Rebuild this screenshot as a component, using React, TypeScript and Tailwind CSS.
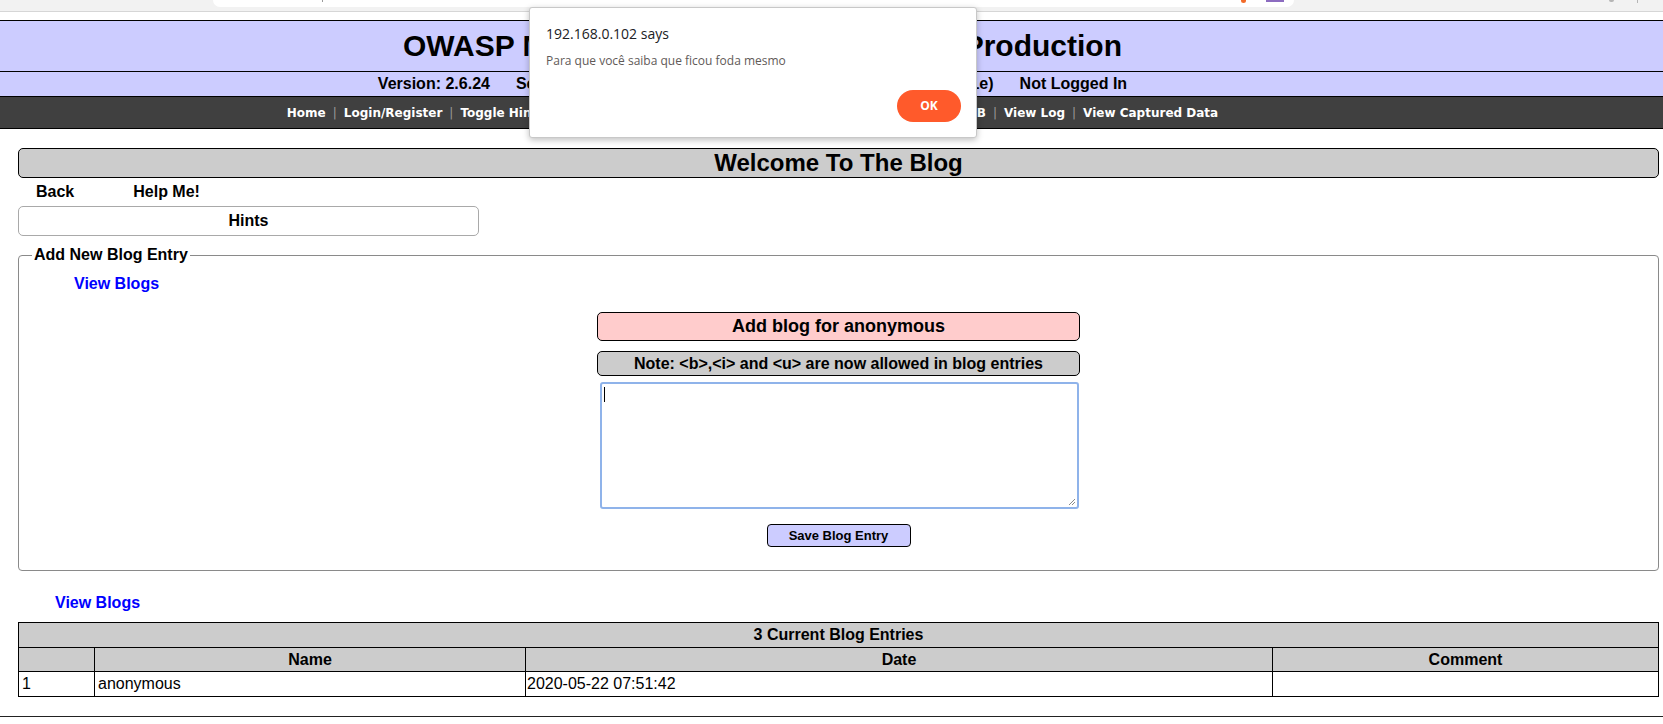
const navItems = [
  "Home",
  "Login/Register",
  "Toggle Hints",
  "Show Popup Hints",
  "Toggle Security",
  "Enforce SSL",
  "Reset DB",
  "View Log",
  "View Captured Data",
];

const App = () => {
  return (
    <div className="relative w-[1663px] h-[724px] overflow-hidden bg-white text-black font-['Liberation_Sans',Arial,sans-serif]">
      {/* browser chrome strip */}
      <div className="h-[12px] bg-[#f2f2f2] border-b border-[#d6d6d6] flex items-start">
        <div className="ml-[213px] w-[1081px] h-[7px] bg-white rounded-b-[7px] flex items-start">
          <div className="ml-[109px] w-px h-[2px] bg-[#9a9a9a]" />
          <div className="ml-[918px] w-[5px] h-[3px] bg-[#f26b2a] rounded-b-full" />
          <div className="ml-[20px] w-[18px] h-[2px] bg-[#8c6cc0]" />
        </div>
        <div className="ml-[315px] w-[5px] h-[2px] bg-[#b5b5b5] rounded-b-sm" />
        <div className="ml-[23px] w-px h-[3px] bg-[#b5b5b5]" />
      </div>

      {/* header */}
      <div className="mt-[8px] border-t border-black bg-[#ccccff]">
        <div className="h-[50px] flex items-center justify-center pr-[138px] text-[30px] font-bold leading-none">
          OWASP Mutillidae II: Web Pwn in Mass Production
        </div>
        <div className="h-[25px] border-t border-black flex items-center justify-center pr-[158px] gap-[26px] text-[16px] font-bold">
          <span>Version: 2.6.24</span>
          <span>Security Level: 0 (Hosed)</span>
          <span>Hints: Enabled (1 - 5cr1pt K1dd1e)</span>
          <span>Not Logged In</span>
        </div>
        <div className="h-[33px] border-y border-black bg-[#404040] flex items-center justify-center pr-[158px] text-white text-[12px] font-bold font-['DejaVu_Sans',Verdana,sans-serif]">
          {navItems.map((item, i) => (
            <span key={item} className="flex items-center">
              {i > 0 && <span className="mx-[7px] font-normal text-[#9a9a9a]">|</span>}
              <span>{item}</span>
            </span>
          ))}
        </div>
      </div>

      {/* page title */}
      <div className="mt-[19px] ml-[18px] w-[1641px] h-[30px] border border-black rounded-[5px] bg-[#cccccc] flex items-center justify-center text-[24px] font-bold">
        Welcome To The Blog
      </div>

      <div className="h-[27px] flex items-center text-[16px] font-bold">
        <span className="ml-[36px]">Back</span>
        <span className="ml-[59px]">Help Me!</span>
      </div>

      <div className="mt-px ml-[18px] w-[461px] h-[30px] border border-[#a9a9a9] rounded-[5px] flex items-center justify-center text-[16px] font-bold">
        Hints
      </div>

      {/* add entry form */}
      <fieldset className="mt-[10px] ml-[18px] w-[1641px] border border-[#8a8a8a] rounded-[4px] pb-[23px]">
        <legend className="ml-[13px] px-[2px] text-[16px] font-bold leading-[18px]">Add New Blog Entry</legend>
        <div className="mt-[11px] ml-[55px] text-[16px] font-bold leading-[18px] text-[#0000ff]">View Blogs</div>
        <div className="mt-[19px] flex flex-col items-center">
          <div className="w-[483px] h-[29px] border border-black rounded-[5px] bg-[#ffcccc] flex items-center justify-center text-[18px] font-bold">
            Add blog for anonymous
          </div>
          <div className="mt-[10px] w-[483px] h-[25px] border border-black rounded-[5px] bg-[#cccccc] flex items-center justify-center text-[16px] font-bold">
            Note: &lt;b&gt;,&lt;i&gt; and &lt;u&gt; are now allowed in blog entries
          </div>
          <div className="relative mt-[6px] ml-[2px] w-[479px] h-[127px] border-2 border-[#8fb3ea] rounded-[3px] bg-white">
            <div className="absolute left-[2px] top-[3px] w-px h-[15px] bg-black" />
            <svg className="absolute right-[1px] bottom-[1px]" width="9" height="9" viewBox="0 0 9 9">
              <line x1="8" y1="2" x2="2" y2="8" stroke="#8a8a8a" strokeWidth="1" />
              <line x1="8" y1="5" x2="5" y2="8" stroke="#8a8a8a" strokeWidth="1" />
            </svg>
          </div>
          <div className="mt-[15px] w-[144px] h-[23px] border border-black rounded-[4px] bg-[#ccccff] flex items-center justify-center text-[13px] font-bold">
            Save Blog Entry
          </div>
        </div>
      </fieldset>

      <div className="mt-[23px] ml-[55px] text-[16px] font-bold leading-[18px] text-[#0000ff]">View Blogs</div>

      {/* entries table */}
      <table className="mt-[10px] ml-[18px] w-[1641px] border-collapse border border-black text-[16px] leading-[18px]">
        <tbody>
          <tr className="h-[25px] bg-[#cccccc]">
            <td colSpan={4} className="border border-black text-center font-bold">3 Current Blog Entries</td>
          </tr>
          <tr className="h-[24px] bg-[#cccccc] font-bold">
            <td className="w-[76px] border border-black" />
            <td className="w-[431px] border border-black text-center">Name</td>
            <td className="w-[747px] border border-black text-center">Date</td>
            <td className="border border-black text-center">Comment</td>
          </tr>
          <tr className="h-[25px]">
            <td className="border border-black px-[3px]">1</td>
            <td className="border border-black px-[3px]">anonymous</td>
            <td className="border border-black px-[1px]">2020-05-22 07:51:42</td>
            <td className="border border-black" />
          </tr>
        </tbody>
      </table>

      <div className="mt-[19px] h-px bg-[#222]" />

      {/* browser alert dialog */}
      <div className="absolute left-[529px] top-[7px] w-[448px] h-[131px] bg-white border border-[#c8c8c8] rounded-[3px] shadow-[0_2px_6px_rgba(0,0,0,0.25)] font-['Open_Sans',sans-serif] flex flex-col">
        <div className="mt-[16px] ml-[16px] text-[14px] leading-[20px] text-[#202124]">192.168.0.102 says</div>
        <div className="mt-[9px] ml-[16px] text-[12px] leading-[16px] text-[#5f5a58]">
          Para que você saiba que ficou foda mesmo
        </div>
        <div className="mt-auto mb-[15px] mr-[15px] self-end w-[64px] h-[32px] rounded-full bg-[#ff5a2b] flex items-center justify-center text-white text-[12px] font-bold">
          OK
        </div>
      </div>
    </div>
  );
};

export default App;
